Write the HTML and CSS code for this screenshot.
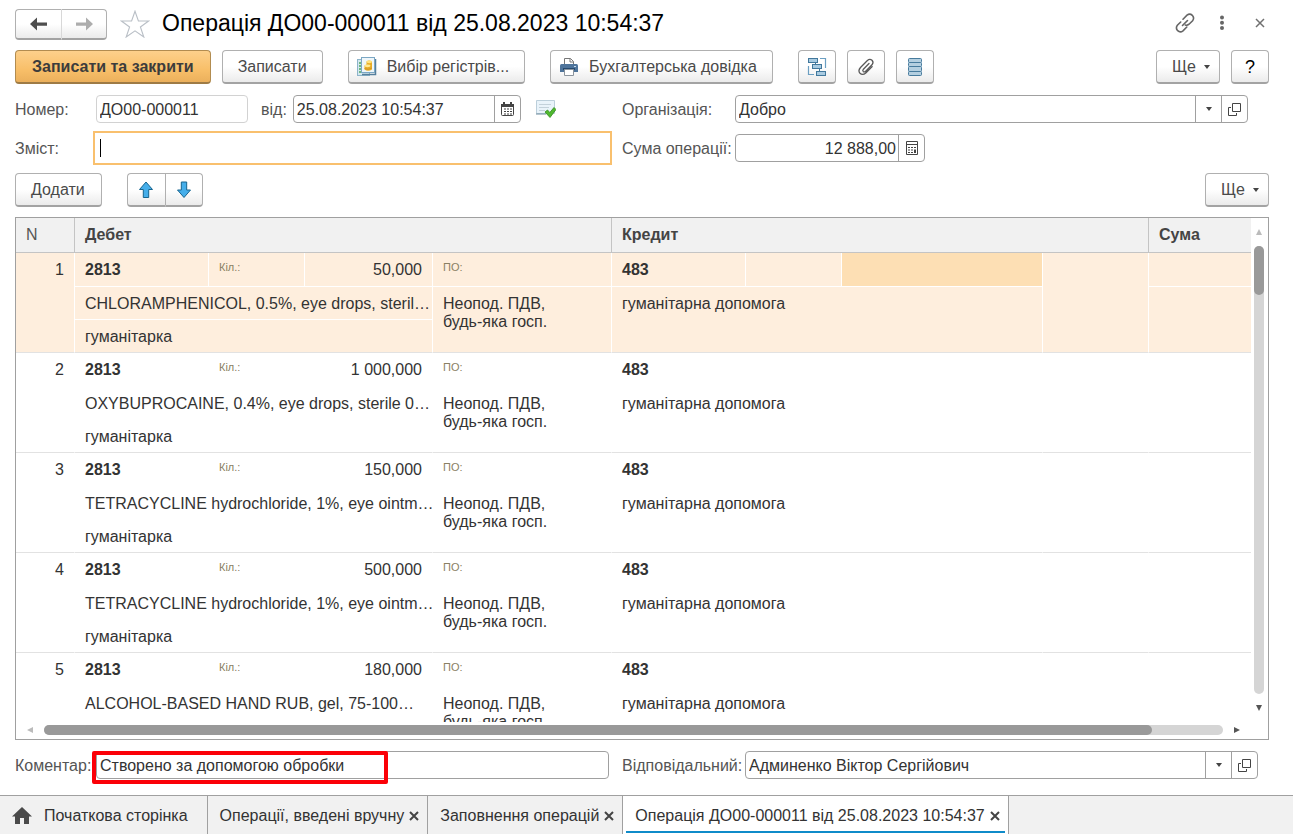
FILE: index.html
```html
<!DOCTYPE html>
<html lang="uk">
<head>
<meta charset="utf-8">
<meta name="viewport" content="width=device-width, initial-scale=1">
<title>Операція ДО00-000011</title>
<link rel="stylesheet" href="styles.css">
</head>
<body>
<main class="window">
  <header class="titlebar">
    <div class="btn-group nav">
      <button class="btn" type="button" aria-label="Назад"><svg width="18" height="14" viewBox="0 0 18 14"><path d="M0 7 7 0.5V5.5H17V8.7H7V13.5Z" fill="#4d4d4d"/></svg></button>
      <button class="btn" type="button" aria-label="Вперед"><svg width="18" height="14" viewBox="0 0 18 14"><path d="M18 7 11 0.5V5.5H1V8.7H11V13.5Z" fill="#adadad"/></svg></button>
    </div>
    <button class="icon-btn star" type="button" aria-label="В обране"><svg width="30" height="28" viewBox="0 0 30 28"><path d="M15 1.2 18.4 11H28.6L20.4 17 23.8 27 15 20.8 6.2 27 9.6 17 1.4 11H11.6Z" fill="#fff" stroke="#b9bfc6" stroke-width="1.1"/></svg></button>
    <h1 class="title">Операція ДО00-000011 від 25.08.2023 10:54:37</h1>
    <div class="window-tools">
      <button class="icon-btn" type="button" aria-label="Посилання"><svg width="20" height="20" viewBox="0 0 20 20" fill="none" stroke="#666" stroke-width="1.6" stroke-linecap="round"><path d="M8 6.2 12 2.2Q14.800-.1 17.300 2.300 19.700 4.900 17.600 7.700L14 11.200Q12.300 12.700 10.300 12"/><path d="M11.800 14 8 17.800Q5.200 20.100 2.700 17.700 .3 15.100 2.400 12.300L5.700 9"/><path d="M7.500 12.500 12.500 7.500"/></svg></button>
      <button class="icon-btn" type="button" aria-label="Меню"><svg width="6" height="16" viewBox="0 0 6 16" fill="#666"><circle cx="3" cy="2.500" r="2"/><circle cx="3" cy="7.700" r="2"/><circle cx="3" cy="12.900" r="2"/></svg></button>
      <button class="icon-btn" type="button" aria-label="Закрити"><svg width="10" height="10" viewBox="0 0 10 10" stroke="#707070" stroke-width="1.500"><path d="M1 1 9 9M9 1 1 9"/></svg></button>
    </div>
  </header>

  <div class="toolbar">
    <button class="btn primary" type="button">Записати та закрити</button>
    <button class="btn text" type="button">Записати</button>
    <button class="btn with-icon spaced" type="button"><svg width="20" height="20" viewBox="0 0 20 20"><rect x=".5" y="2.500" width="12" height="16" fill="#d4e8ef" stroke="#8db4ca"/><path d="M2 6H4M2 9H4M2 12H4M2 15H4" stroke="#4ba75c" stroke-width="1.500"/><path d="M5 17.500H18.500V2" fill="none" stroke="#557f9d" stroke-width="1.500"/><rect x="4.500" y=".5" width="13" height="15" fill="#eef6fa" stroke="#7ba7c4"/><path d="M7.500 8.500V12.500Q11 15 15 12.500V4.500Q12 2.500 9.500 4.500V7.500Z" fill="#e8ad26"/><ellipse cx="12.300" cy="4.800" rx="2.800" ry="1.400" fill="#ffe27c"/><ellipse cx="10.500" cy="8.800" rx="3" ry="1.400" fill="#ffe993"/><path d="M7.500 11.500Q11 13.500 15 11" stroke="#d2962a" fill="none"/></svg>Вибір регістрів...</button>
    <button class="btn with-icon spaced" type="button"><svg width="20" height="20" viewBox="0 0 20 20"><path d="M5.500 8V1.500H11.500L14.500 4.500V8" fill="#fff" stroke="#777"/><path d="M11 1.500V5H14.500" fill="none" stroke="#777"/><path d="M1 8.500Q1 7 2.500 7H17.500Q19 7 19 8.500V15H1Z" fill="#4e749b"/><path d="M4 12H16" stroke="#26496d" stroke-width="2"/><path d="M5.500 12.500H14.500V18.500H5.500Z" fill="#fff" stroke="#8b949d"/><rect x="15" y="9" width="2" height="1" fill="#c8dbec"/></svg>Бухгалтерська довідка</button>
    <button class="btn square spaced" type="button" aria-label="Структура"><svg width="20" height="20" viewBox="0 0 20 20"><path d="M13 1.500H18.500V11M1.500 9V17.500H7" fill="none" stroke="#6b9fc2" stroke-width="1.200"/><path d="M8.500 5V8M12.500 11V15" stroke="#42789c"/><rect x="1.500" y="1.500" width="9" height="4" fill="#a9cbe1" stroke="#42789c"/><rect x="5.500" y="7.500" width="9" height="4" fill="#a9cbe1" stroke="#42789c"/><rect x="9.500" y="14.500" width="9" height="4" fill="#a9cbe1" stroke="#42789c"/></svg></button>
    <button class="btn square" type="button" aria-label="Файли"><svg width="20" height="20" viewBox="0 0 20 20" fill="none" stroke="#595959" stroke-width="1.300" stroke-linecap="round"><path d="M13 6.500 7.400 12.200Q6.200 13.700 7.300 14.600 8.500 15.400 9.700 14.200L16 7.800Q18 5.300 16 3.300 13.800 1.400 11.400 3.500L4.500 10.500Q1.700 13.800 4 16.300 6.500 18.700 9.800 16L16.200 9.600"/></svg></button>
    <button class="btn square" type="button" aria-label="Рухи"><svg width="14" height="20" viewBox="0 0 14 20" fill="#b4cfe0" stroke="#477b9d"><rect x=".5" y="1.500" width="13" height="4" rx="1"/><rect x=".5" y="5.500" width="13" height="4" rx="1"/><rect x=".5" y="9.500" width="13" height="5" rx="1"/><rect x=".5" y="14.500" width="13" height="4" rx="1"/></svg></button>
    <button class="btn more push" type="button">Ще <span class="caret-down"></span></button>
    <button class="btn square help" type="button">?</button>
  </div>

  <form class="fields">
    <div class="line">
      <label class="label first" for="number">Номер:</label>
      <div class="field readonly number"><input id="number" type="text" value="ДО00-000011"></div>
      <label class="label from" for="date">від:</label>
      <div class="field date"><input id="date" type="text" value="25.08.2023 10:54:37"><button class="addon" type="button" aria-label="Календар"><svg width="13" height="14" viewBox="0 0 13 14"><path d="M.5 4V12.500Q.5 13.500 1.500 13.500H11.500Q12.500 13.500 12.500 12.500V4" fill="#fff" stroke="#444"/><path d="M0 2H2V0H4V2H9V0H11V2H13V5H0Z" fill="#444"/><path d="M3 7H5M6 7H8M9 7H11M3 9.500H5M6 9.500H8M9 9.500H11M3 12H5M6 12H8M9 12H11" stroke="#444" stroke-width="1.200"/></svg></button></div>
      <svg class="posted" width="20" height="18" viewBox="0 0 20 18"><path d="M.5 .5H18.500V13.500H.5Z" fill="#e9f3fa" stroke="#bccfdb"/><path d="M0 14H10" stroke="#6f8c9d"/><path d="M3 4.500H15M3 7.500H13M3 10.500H9" stroke="#c3d1da"/><path d="M9 12 11.500 10 13.800 12.500 18 7.500 20 9.500 14 17.500Z" fill="#50b82f" stroke="#308b1c" stroke-width=".8"/></svg>
    </div>
    <div class="line">
      <label class="label org" for="org">Організація:</label>
      <div class="field grow inset"><input id="org" type="text" value="Добро"><button class="addon" type="button" aria-label="Вибрати"><span class="caret-down"></span></button><button class="addon" type="button" aria-label="Відкрити"><svg width="13" height="13" viewBox="0 0 13 13" fill="none" stroke="#444"><path d="M4.500.5H12.500V8.500H4.500Z M3 4.500H.5V12.500H8.500V10"/></svg></button></div>
    </div>
    <div class="line">
      <label class="label content" for="content">Зміст:</label>
      <div class="field active grow"><span class="text-caret"></span><input id="content" type="text"></div>
    </div>
    <div class="line">
      <label class="label org" for="sum">Сума операції:</label>
      <div class="field sum"><input id="sum" type="text" value="12 888,00"><button class="addon" type="button" aria-label="Калькулятор"><svg width="12" height="14" viewBox="0 0 12 14"><path d="M.5.5H11.500V13.500H.5ZM0 3.500H12" fill="#fff" stroke="#444"/><path d="M2 6.500H4M5 6.500H7M8 6.500H10M2 9H4M5 9H7M2 11.500H4M5 11.500H7" stroke="#444" stroke-width="1.200"/><path d="M8 8.500H10V12H8Z" fill="#444"/></svg></button></div>
    </div>
  </form>

  <div class="toolbar commands">
    <button class="btn add" type="button">Додати</button>
    <div class="btn-group arrows spaced">
      <button class="btn" type="button" aria-label="Вгору"><svg width="16" height="18" viewBox="0 0 16 18"><path d="M8 1 14.500 8.500H10.700V16.500H5.300V8.500H1.500Z" fill="#45aeea" stroke="#17658f" stroke-linejoin="round"/></svg></button>
      <button class="btn" type="button" aria-label="Вниз"><svg width="16" height="18" viewBox="0 0 16 18"><path d="M8 16.500 1.500 9H5.300V1H10.700V9H14.500Z" fill="#45aeea" stroke="#17658f" stroke-linejoin="round"/></svg></button>
    </div>
    <button class="btn more push" type="button">Ще <span class="caret-down"></span></button>
  </div>

  <section class="grid">
    <div class="grid-view">
      <table class="entries">
        <colgroup><col class="c-n"><col class="c-acc"><col class="c-lbl"><col class="c-qty"><col class="c-tax"><col class="c-acc"><col class="c-lbl"><col class="c-cur"><col class="c-gap"><col class="c-sum"></colgroup>
        <thead><tr><th class="plain">N</th><th colspan="4">Дебет</th><th colspan="4">Кредит</th><th>Сума</th></tr></thead>
        <tbody class="selected">
          <tr><td class="num end" rowspan="3">1</td><td class="acc">2813</td><td class="hint">Кіл.:</td><td class="num">50,000</td><td class="hint">ПО:</td><td class="acc">483</td><td></td><td class="current"></td><td class="end" rowspan="3"></td><td></td></tr>
          <tr><td class="name" colspan="3">CHLORAMPHENICOL, 0.5%, eye drops, steril…</td><td class="end tax" rowspan="2">Неопод. ПДВ,<br>будь-яка госп.</td><td class="end" rowspan="2" colspan="3">гуманітарна допомога</td><td class="end" rowspan="2"></td></tr>
          <tr><td class="end" colspan="3">гуманітарка</td></tr>
        </tbody>
        <tbody>
          <tr><td class="num end" rowspan="3">2</td><td class="acc">2813</td><td class="hint">Кіл.:</td><td class="num">1 000,000</td><td class="hint">ПО:</td><td class="acc">483</td><td></td><td></td><td class="end" rowspan="3"></td><td></td></tr>
          <tr><td class="name" colspan="3">OXYBUPROCAINE, 0.4%, eye drops, sterile 0…</td><td class="end tax" rowspan="2">Неопод. ПДВ,<br>будь-яка госп.</td><td class="end" rowspan="2" colspan="3">гуманітарна допомога</td><td class="end" rowspan="2"></td></tr>
          <tr><td class="end" colspan="3">гуманітарка</td></tr>
        </tbody>
        <tbody>
          <tr><td class="num end" rowspan="3">3</td><td class="acc">2813</td><td class="hint">Кіл.:</td><td class="num">150,000</td><td class="hint">ПО:</td><td class="acc">483</td><td></td><td></td><td class="end" rowspan="3"></td><td></td></tr>
          <tr><td class="name" colspan="3">TETRACYCLINE hydrochloride, 1%, eye ointm…</td><td class="end tax" rowspan="2">Неопод. ПДВ,<br>будь-яка госп.</td><td class="end" rowspan="2" colspan="3">гуманітарна допомога</td><td class="end" rowspan="2"></td></tr>
          <tr><td class="end" colspan="3">гуманітарка</td></tr>
        </tbody>
        <tbody>
          <tr><td class="num end" rowspan="3">4</td><td class="acc">2813</td><td class="hint">Кіл.:</td><td class="num">500,000</td><td class="hint">ПО:</td><td class="acc">483</td><td></td><td></td><td class="end" rowspan="3"></td><td></td></tr>
          <tr><td class="name" colspan="3">TETRACYCLINE hydrochloride, 1%, eye ointm…</td><td class="end tax" rowspan="2">Неопод. ПДВ,<br>будь-яка госп.</td><td class="end" rowspan="2" colspan="3">гуманітарна допомога</td><td class="end" rowspan="2"></td></tr>
          <tr><td class="end" colspan="3">гуманітарка</td></tr>
        </tbody>
        <tbody>
          <tr><td class="num end" rowspan="3">5</td><td class="acc">2813</td><td class="hint">Кіл.:</td><td class="num">180,000</td><td class="hint">ПО:</td><td class="acc">483</td><td></td><td></td><td class="end" rowspan="3"></td><td></td></tr>
          <tr><td class="name" colspan="3">ALCOHOL-BASED HAND RUB, gel, 75-100…</td><td class="end tax" rowspan="2">Неопод. ПДВ,<br>будь-яка госп.</td><td class="end" rowspan="2" colspan="3">гуманітарна допомога</td><td class="end" rowspan="2"></td></tr>
          <tr><td class="end" colspan="3"></td></tr>
        </tbody>
      </table>
    </div>
    <div class="scroll vertical">
      <span class="arrow"><svg width="6" height="6" viewBox="0 0 6 6"><path d="M3 0 6 6H0Z" fill="#bbb"/></svg></span>
      <span class="track"><span class="thumb"></span></span>
      <span class="arrow"><svg width="6" height="6" viewBox="0 0 6 6"><path d="M0 0H6L3 6Z" fill="#555"/></svg></span>
    </div>
    <div class="scroll horizontal">
      <span class="arrow"><svg width="6" height="6" viewBox="0 0 6 6"><path d="M6 0V6L0 3Z" fill="#bbb"/></svg></span>
      <span class="track"><span class="thumb"></span></span>
      <span class="arrow"><svg width="6" height="6" viewBox="0 0 6 6"><path d="M0 0 6 3 0 6Z" fill="#555"/></svg></span>
    </div>
  </section>

  <form class="fields bottom">
    <div class="line comment">
      <label class="label first" for="comment">Коментар:</label>
      <div class="field grow"><input id="comment" type="text" value="Створено за допомогою обробки"></div>
      <span class="highlight"></span>
    </div>
    <div class="line">
      <label class="label owner" for="owner">Відповідальний:</label>
      <div class="field grow"><input id="owner" type="text" value="Админенко Віктор Сергійович"><button class="addon" type="button" aria-label="Вибрати"><span class="caret-down"></span></button><button class="addon" type="button" aria-label="Відкрити"><svg width="13" height="13" viewBox="0 0 13 13" fill="none" stroke="#444"><path d="M4.500.5H12.500V8.500H4.500Z M3 4.500H.5V12.500H8.500V10"/></svg></button></div>
    </div>
  </form>
</main>

<nav class="tabs">
  <div class="tab home"><a href="#"><svg width="20" height="17" viewBox="0 0 20 17"><path d="M10 0 20 9.500H17V17H12V11H8V17H3V9.500H0Z" fill="#4a4a4a"/></svg>Початкова сторінка</a></div>
  <div class="tab"><a href="#">Операції, введені вручну</a><button class="close" type="button" aria-label="Закрити"><svg width="10" height="10" viewBox="0 0 10 10" stroke="#444" stroke-width="2"><path d="M1 1 9 9M9 1 1 9"/></svg></button></div>
  <div class="tab"><a href="#">Заповнення операцій</a><button class="close" type="button" aria-label="Закрити"><svg width="10" height="10" viewBox="0 0 10 10" stroke="#444" stroke-width="2"><path d="M1 1 9 9M9 1 1 9"/></svg></button></div>
  <div class="tab current"><a href="#">Операція ДО00-000011 від 25.08.2023 10:54:37</a><button class="close" type="button" aria-label="Закрити"><svg width="10" height="10" viewBox="0 0 10 10" stroke="#444" stroke-width="2"><path d="M1 1 9 9M9 1 1 9"/></svg></button></div>
</nav>
</body>
</html>
```
FILE: styles.css
```css
* { box-sizing: border-box; }

body {
  margin: 0;
  height: 100vh;
  display: flex;
  flex-direction: column;
  overflow: hidden;
  background: #fff;
  color: #333;
  font: 16px/18px "Liberation Sans", Arial, sans-serif;
}

button, input { font: inherit; color: inherit; }
button { cursor: pointer; }
svg { display: block; flex: none; }

.window {
  flex: 1;
  min-height: 0;
  display: flex;
  flex-direction: column;
  padding: 9px 24px 16px 15px;
}

/* Title */
.titlebar { display: flex; align-items: flex-start; height: 31px; margin-bottom: 10px; }
.title { margin: 0 0 0 12px; font-size: 23px; line-height: 29px; font-weight: 400; color: #000; white-space: nowrap; }
.icon-btn { display: flex; padding: 0; border: 0; background: none; }
.star { margin-left: 13px; padding-top: 1px; }
.window-tools { display: flex; align-items: center; gap: 26px; height: 28px; margin-left: auto; padding-right: 4px; }
.window-tools .icon-btn:first-child { margin-right: -2px; }
.window-tools .icon-btn:last-child { margin-left: 4px; }

/* Buttons */
.btn {
  display: flex;
  align-items: center;
  justify-content: center;
  height: 34px;
  padding: 0 15px;
  border: 1px solid #b0b0b0;
  border-bottom: 2px solid #a3a3a3;
  border-radius: 4px;
  background: linear-gradient(#fff 50%, #ebebeb);
  color: #4a4a4a;
  white-space: nowrap;
}
.btn.primary {
  padding: 0 16px;
  border-color: #b28c50 #b28c50 #9e7b45;
  background: linear-gradient(#fdd08b, #f8bf69 60%, #ebb05c);
  font-weight: 700;
  color: #3c3c3c;
}
.btn.square { width: 38px; padding: 0; }
.btn.with-icon { gap: 10px; padding: 0 15px 0 8px; }
.btn.add { padding: 0 16px 0 15px; }
.btn.more { width: 64px; gap: 8px; padding: 0 4px 0 10px; }
.btn.help { font-size: 18px; color: #000; }
.btn-group { display: flex; }
.btn-group .btn { width: 38px; padding: 0; }
.btn-group .btn:first-child { border-radius: 4px 0 0 4px; border-right: 0; }
.btn-group .btn:last-child { border-radius: 0 4px 4px 0; }
.nav .btn { width: 46px; height: 31px; }
.nav .btn:last-child { border-left-color: #d8d8d8; }

.toolbar { display: flex; gap: 11px; }
.toolbar .spaced { margin-left: 14px; }
.toolbar .push { margin-left: auto; }

.caret-down {
  border: 3px solid transparent;
  border-top: 4px solid #444;
  border-bottom: 0;
}

/* Fields */
.fields {
  display: grid;
  grid-template-columns: 597fr 647fr;
  column-gap: 10px;
  row-gap: 8px;
  margin: 11px 0 8px;
}
.line { display: flex; align-items: center; min-width: 0; }
.label { flex: none; padding-top: 2px; color: #555; white-space: nowrap; }
.label.first { width: 81px; }
.label.content { width: 78px; }
.label.from { margin: 0 6px 0 13px; }
.label.org { width: 113px; }
.label.owner { width: 123px; }
.field {
  display: flex;
  height: 28px;
  border: 1px solid #a0a0a0;
  border-radius: 4px;
  background: #fff;
}
.field input {
  flex: 1;
  min-width: 0;
  width: 100%;
  padding: 2px 3px 0;
  border: 0;
  outline: 0;
  background: none;
}
.grow { flex: 1; min-width: 0; }
.inset { margin-right: 21px; }
.readonly { border-color: #d2d2d2; }
.number { width: 152px; }
.date { width: 228px; }
.sum { width: 190px; }
.sum input { text-align: right; padding-right: 2px; }
.active { height: 34px; align-items: center; border: 2px solid #f9c06e; border-radius: 0; }
.text-caret { flex: none; width: 1px; height: 18px; margin-left: 5px; background: #000; }
.addon {
  display: flex;
  align-items: center;
  justify-content: center;
  width: 26px;
  padding: 0;
  border: 0;
  border-left: 1px solid #a0a0a0;
  background: none;
}
.posted { margin-left: 15px; }

/* Entries grid */
.grid {
  flex: 1;
  min-height: 0;
  display: grid;
  grid-template: minmax(0, 1fr) 17px / minmax(0, 1fr) 17px;
  margin-top: 10px;
  border: 1px solid #a0a0a0;
}
.grid-view { overflow: hidden; }
.entries { width: 100%; table-layout: fixed; border-collapse: separate; border-spacing: 0; }
.c-n { width: 59px; }
.c-acc { width: 134px; }
.c-lbl { width: 96px; }
.c-qty { width: 128px; }
.c-tax { width: 179px; }
.c-cur { width: 201px; }
.c-gap { width: 106px; }
.c-sum { width: 102px; }
.entries th {
  height: 35px;
  padding: 0 10px;
  border-right: 1px solid #c4c4c4;
  border-bottom: 1px solid #c4c4c4;
  background: #f1f1f1;
  color: #444;
  text-align: left;
}
.entries th:last-child { border-right: 0; }
.entries th.plain { font-weight: 400; color: #555; }
.entries td {
  height: 33px;
  padding: 8px 10px 0;
  border-right: 1px solid #fff;
  border-bottom: 1px solid #fff;
  vertical-align: top;
  white-space: nowrap;
}
.entries tr:first-child td { height: 34px; }
.entries tr:not(:last-child) td:last-child { border-right: 0; }
.entries td.end { border-bottom: 1px solid #e2e2e2; }
.entries td.num { text-align: right; }
.entries td.acc { font-weight: 700; }
.entries td.hint { padding-top: 7px; font-size: 11px; line-height: 14px; color: #8a8063; }
.entries td.name { padding-right: 0; }
.selected td { background: #feeedd; }
.selected td.current { background: #fddfb4; }

/* Scroll bars */
.scroll { display: flex; align-items: center; }
.scroll.vertical { flex-direction: column; padding-right: 2px; }
.scroll.horizontal { padding-bottom: 2px; }
.scroll .arrow { display: flex; flex: none; align-items: center; justify-content: center; width: 28px; height: 28px; }
.scroll.horizontal .arrow { height: 10px; }
.scroll .track { flex: 1; display: flex; border-radius: 5px; background: #d5d5d5; }
.vertical .track { width: 10px; }
.horizontal .track { height: 10px; }
.scroll .thumb { border-radius: 5px; background: #999; }
.vertical .thumb { width: 10px; height: 11%; }
.horizontal .thumb { width: 94%; height: 10px; }

/* Footer fields */
.fields.bottom { margin: 11px 0 0; padding-right: 11px; grid-template-columns: 594fr 636fr; column-gap: 13px; }
.comment { position: relative; }
.highlight {
  position: absolute;
  left: 77px;
  top: 0;
  width: 296px;
  height: 33px;
  border: 4px solid #fb0007;
  border-radius: 2px;
}

/* Window tabs */
.tabs { display: flex; flex: none; height: 39px; border-top: 1px solid #a0a0a0; background: #f1f1f1; }
.tab { display: flex; align-items: center; gap: 5px; padding: 1px 8px 0 12px; border-right: 1px solid #a0a0a0; }
.tab a { color: #333; text-decoration: none; white-space: nowrap; }
.tab.home { padding-right: 19px; }
.tab.home a { display: flex; align-items: center; gap: 12px; }
.tab.current { position: relative; background: #fff; }
.tab.current::after { content: ""; position: absolute; left: 3px; right: 3px; bottom: 1px; height: 2px; background: #0f8bc9; }
.close { display: flex; padding: 0; border: 0; background: none; }
```
